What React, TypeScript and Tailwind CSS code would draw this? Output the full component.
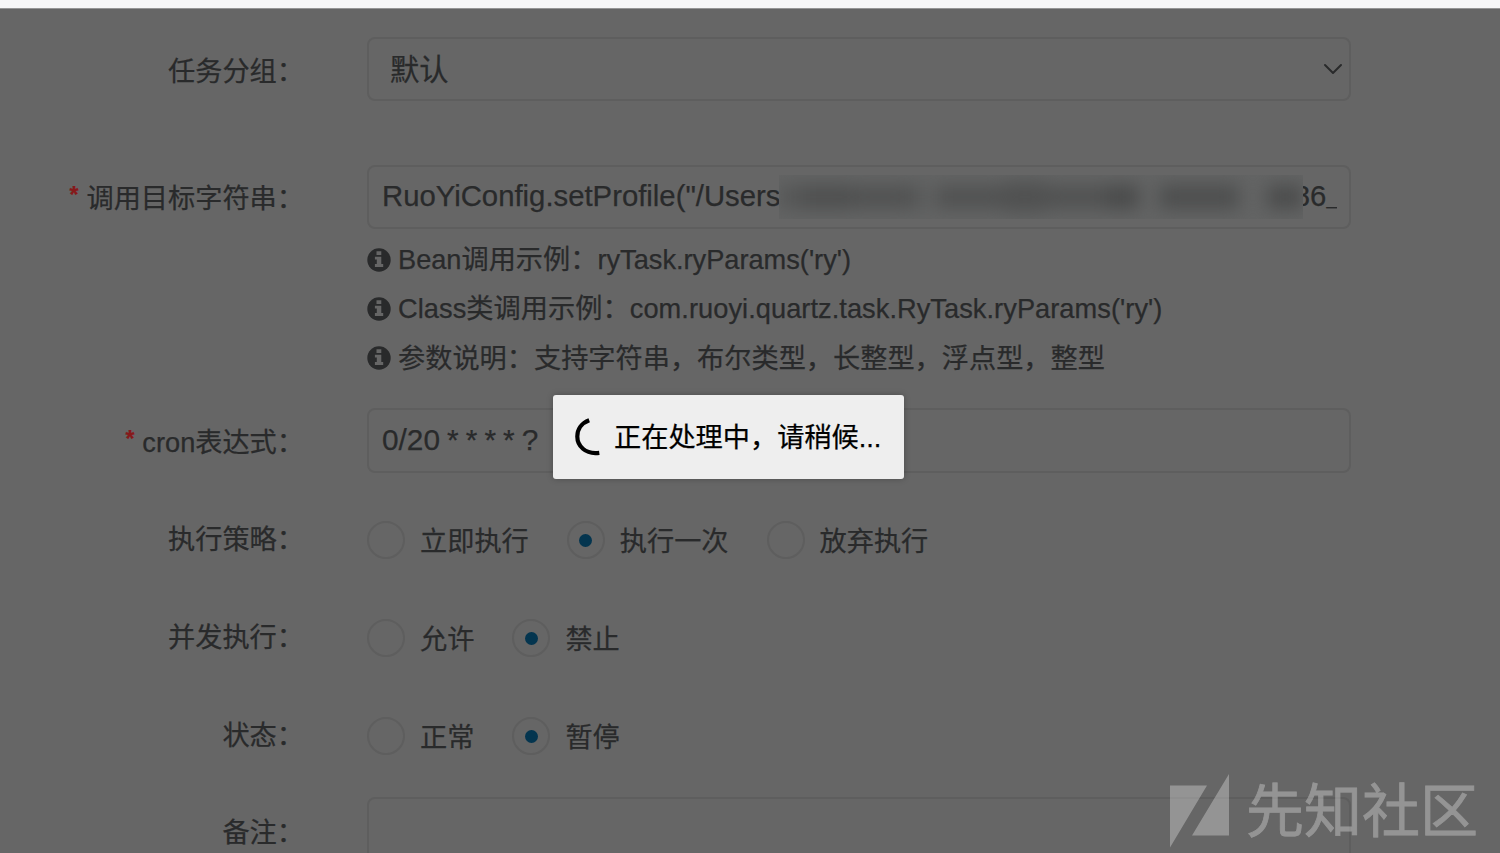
import type { ReactNode } from "react";

const fieldBox = "rounded-[8px] border-2 border-[#5e5e5e] w-[984px] shrink-0";

function Label({ children, required, className = "" }: { children: ReactNode; required?: boolean; className?: string }) {
  return (
    <div className={`w-[304px] mr-[63px] shrink-0 flex items-start justify-end whitespace-nowrap leading-[40px] ${className}`}>
      {required && <span className="-mt-[4px] mr-[8px] font-bold text-[23px] text-[#86191a]">*</span>}
      <span>{children}</span>
    </div>
  );
}

function InfoIcon() {
  return (
    <svg width="24" height="24" viewBox="0 0 24 24" className="mr-[7px] shrink-0">
      <circle cx="12" cy="12" r="11.7" fill="#292a2b" />
      <path d="M9.5 3.3h4.8v3.7H9.5zM7.9 8.7h6.4v7.4h1.9v2.8H7.9v-2.8h1.9v-4.6H7.9z" fill="#666" />
    </svg>
  );
}

function Hint({ children, className = "" }: { children: ReactNode; className?: string }) {
  return (
    <div className="flex h-[49px] items-center whitespace-nowrap">
      <InfoIcon />
      <span className={className}>{children}</span>
    </div>
  );
}

function Radio({ label, checked }: { label: string; checked?: boolean }) {
  return (
    <label className="flex items-center mr-[38px]">
      <span className="flex size-[38px] items-center justify-center rounded-full border-2 border-[#5e5e5e] mr-[15px]">
        {checked && <span className="size-[13px] rounded-full bg-[#04354f]" />}
      </span>
      <span className="mt-[3px]">{label}</span>
    </label>
  );
}

function RadioRow({ label, options, selected }: { label: string; options: string[]; selected: number }) {
  return (
    <div className="flex h-[98px] items-center">
      <Label>{label}</Label>
      {options.map((o, i) => (
        <Radio key={o} label={o} checked={i === selected} />
      ))}
    </div>
  );
}

function Redacted() {
  return (
    <div className="h-[44px] w-[524px] shrink-0 overflow-hidden bg-[#636464]">
      <div className="flex h-full items-center blur-[9px]">
        <span className="h-[24px] w-[24px] bg-[#555656]" />
        <span className="h-[24px] w-[50px] bg-[#4e4f4f]" />
        <span className="h-[22px] w-[54px] bg-[#505151]" />
        <span className="h-[24px] w-[12px] bg-[#525353]" />
        <span className="h-[24px] w-[18px] bg-[#5f6060]" />
        <span className="h-[22px] w-[66px] bg-[#505151]" />
        <span className="h-[30px] w-[44px] bg-[#505151]" />
        <span className="h-[22px] w-[60px] bg-[#505151]" />
        <span className="mr-[20px] h-[24px] w-[32px] bg-[#494a4a]" />
        <span className="mr-[28px] h-[24px] w-[80px] bg-[#4d4e4e]" />
        <span className="h-[24px] w-[36px] bg-[#4b4c4c]" />
      </div>
    </div>
  );
}

export default function App() {
  return (
    <div className="relative flex h-[853px] w-[1500px] flex-col overflow-hidden bg-[#666] font-['Liberation_Sans','Noto_Sans_CJK_SC',sans-serif] text-[27.2px] leading-[40px] text-[#292a2b] [-webkit-text-stroke:0.25px]">
      <div className="h-[9px] shrink-0 border-b border-[#969696] bg-[#f7f7f8]" />
      <div className="flex flex-col pt-[28px]">
        <div className="flex h-[64px] items-center">
          <Label className="mt-[5px]">任务分组：</Label>
          <div className={`${fieldBox} flex h-[64px] items-center justify-between pl-[21px] pr-[6px] text-[29.3px]`}>
            <span className="mt-[2px]">默认</span>
            <svg width="20" height="14" viewBox="0 0 20 14" fill="none" stroke="#292a2b" strokeWidth="2" strokeLinecap="round" strokeLinejoin="round">
              <path d="M2 3l8 8 8-8" />
            </svg>
          </div>
        </div>

        <div className="mt-[64px] flex h-[218px] items-start">
          <Label required className="mt-[14px]">调用目标字符串：</Label>
          <div className="flex flex-col">
            <div className={`${fieldBox} mb-[6px] flex h-[64px] items-center pl-[13px] text-[29.3px] whitespace-nowrap`}>
              <span className="-mt-[2px] w-[397px] shrink-0 overflow-hidden">RuoYiConfig.setProfile("/Users</span>
              <Redacted />
              <span className="flex w-[34px] justify-end overflow-hidden">
                86<span className="mt-[2px] text-[19px]">_</span>
              </span>
            </div>
            <Hint>Bean调用示例：ryTask.ryParams('ry')</Hint>
            <Hint className="tracking-[0.06px]">Class类调用示例：com.ruoyi.quartz.task.RyTask.ryParams('ry')</Hint>
            <Hint className="mt-[2px]">参数说明：支持字符串，布尔类型，长整型，浮点型，整型</Hint>
          </div>
        </div>

        <div className="mt-[25px] flex h-[65px] items-center">
          <Label required className="mt-[5px]">cron表达式：</Label>
          <div className={`${fieldBox} flex h-[65px] items-center pl-[13px] text-[29.8px] [word-spacing:-1.2px]`}>
            <span className="-mt-[2px]">0/20 * * * * ?</span>
          </div>
        </div>

        <div className="mt-[18px] flex flex-col">
          <RadioRow label="执行策略：" options={["立即执行", "执行一次", "放弃执行"]} selected={1} />
          <RadioRow label="并发执行：" options={["允许", "禁止"]} selected={1} />
          <RadioRow label="状态：" options={["正常", "暂停"]} selected={1} />
        </div>

        <div className="mt-[12px] flex items-start">
          <Label className="mt-[16px]">备注：</Label>
          <div className={`${fieldBox} h-[120px]`} />
        </div>
      </div>

      <div className="absolute left-[553px] top-[395px] flex h-[84px] w-[351px] items-center rounded-[3px] bg-[#eee] pl-[21px] text-black shadow-[0_0_6px_rgba(0,0,0,0.25)]">
        <svg width="30" height="40" viewBox="0 0 30 40" fill="none" stroke="#000" strokeWidth="4.2" className="mr-[10px]">
          <path d="M15.2 3.2C7.5 6 3.3 12.5 3.3 19.5C3.3 28.5 11 37.8 25.3 35.8" />
        </svg>
        <span className="mt-[2px] whitespace-nowrap">正在处理中，请稍候...</span>
      </div>

      <div className="absolute left-[1170px] top-[773px] flex h-[76px] items-center text-white opacity-30">
        <svg width="60" height="76" viewBox="0 0 60 76" fill="#fff" className="shrink-0">
          <path d="M0 12.5h37L0 74.5zM59 1v61.5H22z" />
        </svg>
        <span className="ml-[16px] mt-[2px] whitespace-nowrap text-[58px] leading-[76px] [-webkit-text-stroke:0.8px]">先知社区</span>
      </div>
    </div>
  );
}
